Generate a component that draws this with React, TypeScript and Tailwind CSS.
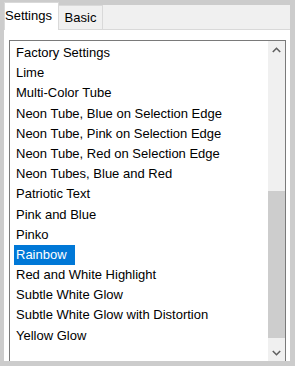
import React from 'react';

const items = [
  'Factory Settings',
  'Lime',
  'Multi-Color Tube',
  'Neon Tube, Blue on Selection Edge',
  'Neon Tube, Pink on Selection Edge',
  'Neon Tube, Red on Selection Edge',
  'Neon Tubes, Blue and Red',
  'Patriotic Text',
  'Pink and Blue',
  'Pinko',
  'Rainbow',
  'Red and White Highlight',
  'Subtle White Glow',
  'Subtle White Glow with Distortion',
  'Yellow Glow',
];

const selected = 'Rainbow';

const Chevron = ({ up }: { up: boolean }) => (
  <svg width="9" height="6" viewBox="0 0 9 6" fill="none">
    <polyline
      points={up ? '0.8,5 4.5,1.3 8.2,5' : '0.8,1 4.5,4.7 8.2,1'}
      stroke="#606060"
      strokeWidth="1.6"
    />
  </svg>
);

export default function App() {
  return (
    <div
      className="w-[295px] h-[366px] overflow-hidden bg-[#cccccc] flex flex-col pt-[5px] pl-[4px] pr-[5px] pb-[5px] text-[13px] text-black"
      style={{ fontFamily: '"Liberation Sans", Arial, sans-serif' }}
    >
      {/* Tab strip */}
      <div className="flex items-start h-[25px] shrink-0 bg-[#f0f0f0] border-b border-[#d9d9d9]">
        <div className="relative z-10 -mt-[3px] h-[28px] w-[55px] bg-white border-t border-x border-[#d9d9d9] pt-[5px] leading-[16px] whitespace-nowrap">
          Settings
        </div>
        <div className="self-stretch w-[44px] border-t border-r border-[#d9d9d9] pt-[4px] leading-[16px] text-center">
          Basic
        </div>
      </div>

      {/* Page */}
      <div className="flex-1 min-h-0 overflow-hidden bg-white pt-[10px] pl-[5px] pr-[4px]">
        <div className="flex h-[322px] border border-[#7a7a7a]">
          <div className="flex-1 min-w-0 pl-[4px] pt-[2px] overflow-hidden">
            {items.map((item) => (
              <div key={item} className="h-[20.2px] flex whitespace-nowrap">
                <span
                  className={
                    item === selected
                      ? 'h-full leading-[19px] pl-[2px] pr-[8px] bg-[#0078d7] text-white'
                      : 'h-full leading-[19px] pl-[2px]'
                  }
                >
                  {item}
                </span>
              </div>
            ))}
          </div>

          {/* Scrollbar */}
          <div className="w-[17px] shrink-0 flex flex-col bg-[#f0f0f0]">
            <div className="h-[17px] flex items-center justify-center">
              <Chevron up />
            </div>
            <div className="h-[133px]" />
            <div className="h-[147px] bg-[#cdcdcd]" />
            <div className="flex-1" />
            <div className="h-[17px] flex items-center justify-center">
              <Chevron up={false} />
            </div>
          </div>
        </div>
      </div>
    </div>
  );
}
